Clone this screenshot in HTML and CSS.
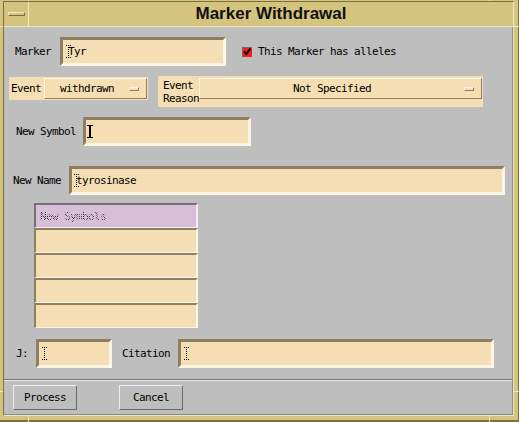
FILE: index.html
```html
<!DOCTYPE html>
<html>
<head>
<meta charset="utf-8">
<title>Marker Withdrawal</title>
<link rel="stylesheet" href="styles.css">
</head>
<body>
<div class="window">
  <span class="notch nv nt1"></span><span class="notch nv nt2"></span>
  <span class="notch nv nb1"></span><span class="notch nv nb2"></span>
  <span class="notch nh nl1"></span><span class="notch nh nl2"></span>
  <span class="notch nh nr1"></span><span class="notch nh nr2"></span>
  <div class="inner">
    <div class="titlebar">
      <div class="menu-btn"><span class="menu-bar"></span></div>
      <div class="title">Marker Withdrawal</div>
    </div>
    <div class="content">
      <div class="row row-marker">
        <span class="label lb-marker">Marker</span>
        <div class="field f-marker"><svg class="ibeam" width="5" height="13" viewBox="0 0 5 13"><path d="M0 0.5H5M0 12.5H5M2.5 0V13" stroke="#000" stroke-dasharray="1 1" fill="none"/></svg><span class="val">Tyr</span></div>
        <span class="check"><svg width="10" height="10" viewBox="0 0 10 10"><path d="M2 4.5L4.2 7L8.5 1.5" stroke="#000" stroke-width="2" fill="none"/></svg></span>
        <span class="label lb-check">This Marker has alleles</span>
      </div>
      <div class="row row-event">
        <div class="panel p-event">
          <span class="label lb-event">Event</span>
          <div class="option o-event"><span class="opt-text">withdrawn</span><span class="ind"></span></div>
        </div>
        <div class="panel p-reason">
          <span class="label lb-reason">Event<br>Reason</span>
          <div class="option o-reason"><span class="opt-text">Not Specified</span><span class="ind"></span></div>
        </div>
      </div>
      <div class="row row-symbol">
        <span class="label lb-symbol">New Symbol</span>
        <div class="field f-symbol"><svg class="ibeam solid" width="6" height="13" viewBox="0 0 6 13"><path d="M0 0.5H6M0 12.5H6M2.5 0V13" stroke="#000" stroke-width="1" fill="none"/><path d="M3.5 1V12" stroke="#000" stroke-width="1"/></svg></div>
      </div>
      <div class="row row-name">
        <span class="label lb-name">New Name</span>
        <div class="field f-name"><svg class="ibeam" width="5" height="13" viewBox="0 0 5 13"><path d="M0 0.5H5M0 12.5H5M2.5 0V13" stroke="#000" stroke-dasharray="1 1" fill="none"/></svg><span class="val">tyrosinase</span></div>
      </div>
      <div class="table">
        <div class="cell head"><span class="stipple">New Symbols</span></div>
        <div class="cell"></div>
        <div class="cell"></div>
        <div class="cell"></div>
        <div class="cell"></div>
      </div>
      <div class="row row-j">
        <span class="label lb-j">J:</span>
        <div class="field f-j"><svg class="ibeam" width="5" height="13" viewBox="0 0 5 13"><path d="M0 0.5H5M0 12.5H5M2.5 0V13" stroke="#000" stroke-dasharray="1 1" fill="none"/></svg></div>
        <span class="label lb-cit">Citation</span>
        <div class="field f-cit"><svg class="ibeam" width="5" height="13" viewBox="0 0 5 13"><path d="M0 0.5H5M0 12.5H5M2.5 0V13" stroke="#000" stroke-dasharray="1 1" fill="none"/></svg></div>
      </div>
      <div class="separator"></div>
      <div class="buttons">
        <div class="btn">Process</div>
        <div class="btn">Cancel</div>
      </div>
    </div>
  </div>
</div>
</body>
</html>
```

FILE: styles.css
```css
:root {
  --olive: #d4c47f;
  --olive-dark: #7c7040;
  --olive-light: #f1e9bb;
  --gray: #bebebe;
  --gray-dark: #707070;
  --gray-light: #ececec;
  --wheat: #f5deb3;
  --wheat-dark: #8e7e62;
  --wheat-light: #fdf6e6;
  --thistle: #d8bfd8;
  --thistle-dark: #7c6e7e;
  --thistle-light: #f4ecf4;
}

* { box-sizing: border-box; }

html, body {
  margin: 0;
  padding: 0;
  background: var(--olive);
}

body {
  font-family: "DejaVu Sans Mono", "Liberation Mono", monospace;
  font-size: 11px;
  letter-spacing: -0.62px;
  color: #000;
}

.window {
  position: relative;
  width: 519px;
  height: 422px;
  background: var(--olive);
  padding: 1px 4px 4px 3px;
  border-right: 1px solid var(--olive-dark);
  border-bottom: 2px solid var(--olive-dark);
}

.notch { position: absolute; background: var(--olive-light); }
.nv { width: 1px; }
.nh { height: 1px; }
.nt1 { left: 28px; top: 0; height: 1px; }
.nt2 { left: 489px; top: 0; height: 1px; }
.nb1 { left: 28px; bottom: -2px; height: 6px; }
.nb2 { left: 489px; bottom: -2px; height: 6px; }
.nl1 { left: 0; top: 26px; width: 3px; }
.nl2 { left: 0; top: 391px; width: 3px; }
.nr1 { right: -1px; top: 26px; width: 5px; }
.nr2 { right: -1px; top: 391px; width: 5px; }

.inner {
  height: 100%;
  display: flex;
  flex-direction: column;
  border-left: 1px solid var(--olive-dark);
  border-top: 1px solid var(--olive-dark);
  border-right: 1px solid var(--olive-light);
  border-bottom: 1px solid var(--olive-light);
}

.titlebar {
  height: 25px;
  flex: none;
  display: flex;
  border-bottom: 1px solid var(--olive-light);
}

.menu-btn {
  width: 25px;
  border-right: 1px solid var(--olive-light);
  display: flex;
  align-items: center;
  justify-content: center;
}

.menu-bar {
  width: 17px;
  height: 4px;
  border-top: 1px solid var(--olive-light);
  border-left: 1px solid var(--olive-light);
  border-bottom: 1px solid var(--olive-dark);
  border-right: 1px solid var(--olive-dark);
}

.title {
  flex: 1;
  text-align: center;
  font-family: "Liberation Sans", Arial, sans-serif;
  font-weight: bold;
  font-size: 17px;
  letter-spacing: 0;
  line-height: 24px;
  color: #111;
}

.content {
  flex: 1;
  background: var(--gray);
  border-right: 1px solid #8a8a8a;
  border-bottom: 1px solid #8a8a8a;
  display: flex;
  flex-direction: column;
}

.row {
  display: flex;
  align-items: center;
  flex: none;
}

.label {
  white-space: nowrap;
  line-height: 13px;
}

.field {
  height: 29px;
  background: var(--wheat);
  border-top: 3px solid var(--wheat-dark);
  border-left: 3px solid var(--wheat-dark);
  border-bottom: 3px solid var(--wheat-light);
  border-right: 3px solid var(--wheat-light);
  display: flex;
  align-items: center;
  padding-left: 3px;
}

.ibeam { display: block; flex: none; margin-right: -3px; shape-rendering: crispEdges; }
.ibeam.solid { margin-left: -1px; }
.val { line-height: 13px; white-space: pre; }

.row-marker { margin-top: 10px; height: 29px; padding-left: 11px; }
.lb-marker { width: 45px; }
.f-marker { width: 166px; }
.check {
  margin-left: 16px;
  width: 10px;
  height: 10px;
  background: #ff1a1a;
  border-top: 1px solid #6a6a6a;
  border-left: 1px solid #6a6a6a;
  display: flex;
}
.check svg { display: block; margin: -1px 0 0 -1px; }
.lb-check { margin-left: 6px; }

.row-event {
  margin-top: 10px;
  height: 31px;
  padding-left: 5px;
  align-items: flex-start;
}
.panel {
  background: var(--wheat);
  display: flex;
}
.p-event {
  margin-top: 1px;
  width: 139px;
  height: 23px;
  padding-left: 2px;
  align-items: center;
}
.lb-event { width: 33px; }
.p-reason {
  margin-left: 10px;
  width: 325px;
  height: 31px;
  padding-left: 5px;
  align-items: flex-start;
}
.lb-reason { width: 36px; padding-top: 3px; line-height: 13px; }
.option {
  height: 21px;
  display: flex;
  align-items: center;
  background: var(--wheat);
  border-top: 1px solid var(--wheat-light);
  border-left: 1px solid var(--wheat-light);
  border-bottom: 1px solid var(--wheat-dark);
  border-right: 1px solid var(--wheat-dark);
}
.o-event { width: 103px; }
.o-reason { width: 283px; margin-top: 2px; }
.opt-text { flex: 1; text-align: center; white-space: nowrap; line-height: 13px; }
.ind {
  width: 10px;
  height: 4px;
  margin-right: 7px;
  border-top: 1px solid var(--wheat-light);
  border-left: 1px solid var(--wheat-light);
  border-bottom: 1px solid var(--wheat-dark);
  border-right: 1px solid var(--wheat-dark);
}

.row-symbol { margin-top: 10px; height: 29px; padding-left: 12px; }
.lb-symbol { width: 67px; }
.f-symbol { width: 168px; padding-left: 2px; }

.row-name { margin-top: 20px; height: 29px; padding-left: 9px; }
.lb-name { width: 56px; }
.f-name { width: 436px; padding-left: 2px; }

.table {
  flex: none;
  margin-top: 8px;
  margin-left: 30px;
  width: 164px;
  display: flex;
  flex-direction: column;
}
.cell {
  height: 25px;
  background: var(--wheat);
  border-top: 2px solid var(--wheat-dark);
  border-left: 2px solid var(--wheat-dark);
  border-right: 2px solid var(--wheat-light);
  border-bottom: 1px solid var(--wheat-light);
}
.cell.head {
  background: var(--thistle);
  border-top: 2px solid var(--thistle-dark);
  border-left: 2px solid var(--thistle-dark);
  border-right: 2px solid var(--thistle-light);
  border-bottom: 1px solid var(--thistle-light);
  padding-left: 4px;
  display: flex;
  align-items: center;
}
.stipple {
  line-height: 13px;
  white-space: nowrap;
  color: transparent;
  background-image: repeating-conic-gradient(#2e222e 0 25%, transparent 0 50%);
  background-size: 2px 2px;
  -webkit-background-clip: text;
  background-clip: text;
}

.row-j { margin-top: 11px; height: 29px; padding-left: 12px; }
.lb-j { width: 20px; }
.f-j { width: 76px; }
.lb-cit { margin-left: 10px; width: 56px; }
.f-cit { width: 316px; }

.separator {
  flex: none;
  margin-top: 11px;
  height: 2px;
  border-top: 1px solid #767676;
  border-bottom: 1px solid var(--gray-light);
}

.buttons {
  flex: none;
  margin-top: 4px;
  height: 25px;
  padding-left: 9px;
  display: flex;
  gap: 42px;
}
.btn {
  width: 64px;
  height: 25px;
  border-top: 1px solid var(--gray-light);
  border-left: 1px solid var(--gray-light);
  border-bottom: 1px solid #6a6a6a;
  border-right: 1px solid #6a6a6a;
  display: flex;
  align-items: center;
  justify-content: center;
  line-height: 13px;
}
```
